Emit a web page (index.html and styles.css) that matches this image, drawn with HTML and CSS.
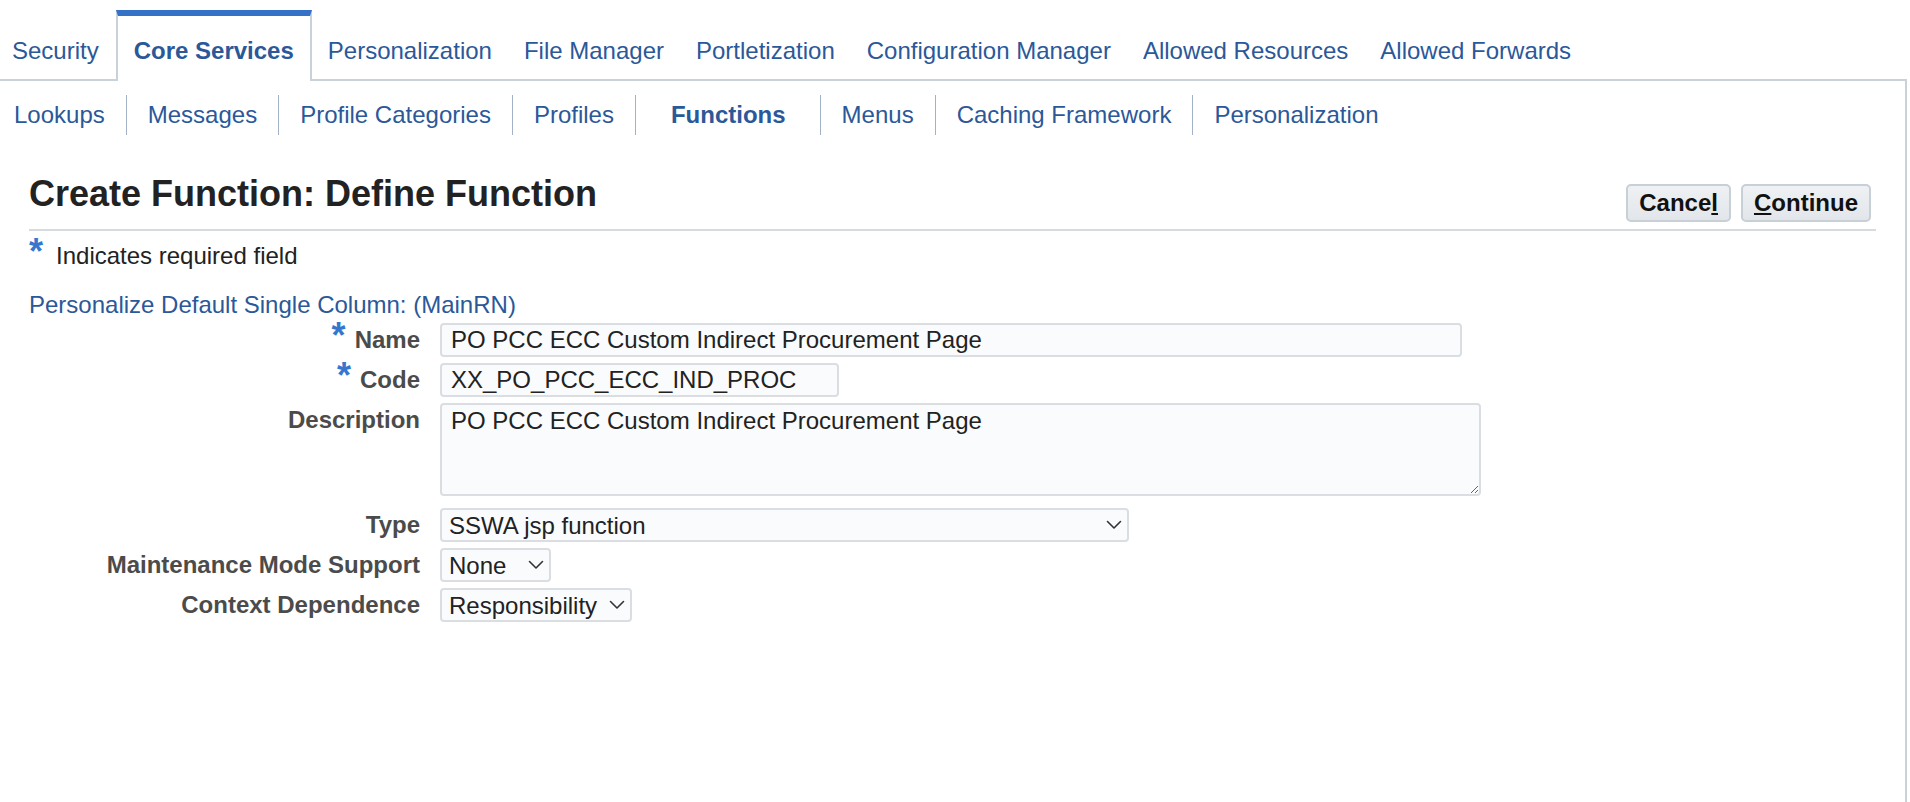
FILE: index.html
```html
<!DOCTYPE html>
<html lang="en">
<head>
<meta charset="utf-8">
<title>Create Function: Define Function</title>
<link rel="stylesheet" href="styles.css">
</head>
<body>
<div class="page">
  <nav class="tabs">
    <a class="tab first" href="#">Security</a>
    <a class="tab active" href="#">Core Services</a>
    <a class="tab" href="#">Personalization</a>
    <a class="tab" href="#">File Manager</a>
    <a class="tab" href="#">Portletization</a>
    <a class="tab" href="#">Configuration Manager</a>
    <a class="tab" href="#">Allowed Resources</a>
    <a class="tab" href="#">Allowed Forwards</a>
  </nav>
  <div class="panel">
    <nav class="subtabs">
      <a class="subtab" href="#">Lookups</a>
      <a class="subtab" href="#">Messages</a>
      <a class="subtab" href="#">Profile Categories</a>
      <a class="subtab" href="#">Profiles</a>
      <a class="subtab current" href="#">Functions</a>
      <a class="subtab" href="#">Menus</a>
      <a class="subtab" href="#">Caching Framework</a>
      <a class="subtab" href="#">Personalization</a>
    </nav>

    <div class="header">
      <h1 class="title">Create Function: Define Function</h1>
      <div class="actions">
        <button class="btn" type="button">Cance<u>l</u></button>
        <button class="btn" type="button"><u>C</u>ontinue</button>
      </div>
    </div>

    <div class="required"><span class="req">*</span>Indicates required field</div>
    <a class="personalize" href="#">Personalize Default Single Column: (MainRN)</a>

    <div class="form">
      <label class="label"><span class="req">*</span>Name</label>
      <div class="field"><input class="input w-name" type="text" value="PO PCC ECC Custom Indirect Procurement Page"></div>

      <label class="label"><span class="req">*</span>Code</label>
      <div class="field"><input class="input w-code" type="text" value="XX_PO_PCC_ECC_IND_PROC"></div>

      <label class="label">Description</label>
      <div class="field field-area"><textarea class="textarea">PO PCC ECC Custom Indirect Procurement Page</textarea></div>

      <label class="label">Type</label>
      <div class="field">
        <span class="select-wrap w-type">
          <select class="select"><option>SSWA jsp function</option></select>
          <svg class="chev" width="16" height="10" viewBox="0 0 16 10"><path d="M1.5 1.5 L8 8 L14.5 1.5" fill="none" stroke="#333" stroke-width="1.6" stroke-linecap="round" stroke-linejoin="round"/></svg>
        </span>
      </div>

      <label class="label">Maintenance Mode Support</label>
      <div class="field">
        <span class="select-wrap w-maint">
          <select class="select"><option>None</option></select>
          <svg class="chev" width="16" height="10" viewBox="0 0 16 10"><path d="M1.5 1.5 L8 8 L14.5 1.5" fill="none" stroke="#333" stroke-width="1.6" stroke-linecap="round" stroke-linejoin="round"/></svg>
        </span>
      </div>

      <label class="label">Context Dependence</label>
      <div class="field">
        <span class="select-wrap w-ctx">
          <select class="select"><option>Responsibility</option></select>
          <svg class="chev" width="16" height="10" viewBox="0 0 16 10"><path d="M1.5 1.5 L8 8 L14.5 1.5" fill="none" stroke="#333" stroke-width="1.6" stroke-linecap="round" stroke-linejoin="round"/></svg>
        </span>
      </div>
    </div>
  </div>
</div>
</body>
</html>
```

FILE: styles.css
```css
* { box-sizing: border-box; }

html, body {
  margin: 0;
  background: #ffffff;
}

body {
  font-family: "Liberation Sans", Arial, Helvetica, sans-serif;
  font-size: 24px;
  color: #222222;
  overflow: hidden;
}

.page {
  width: 1907px;
  height: 802px;
  display: flex;
  flex-direction: column;
}

/* ---------- top tabs ---------- */
.tabs {
  display: flex;
  align-items: flex-end;
  height: 81px;
  border-bottom: 2px solid #c9d1d9;
  flex: none;
}

.tab {
  height: 69px;
  display: flex;
  align-items: center;
  padding: 7px 14px 0;
  border: 2px solid transparent;
  border-top: 6px solid transparent;
  border-bottom: 0;
  color: #2b5899;
  text-decoration: none;
  white-space: nowrap;
}

.tab.first { padding-left: 10px; padding-right: 15px; }

.tab.active {
  height: 71px;
  margin-bottom: -2px;
  padding: 7px 16px 2px;
  background: #ffffff;
  border-color: #c9d1d9;
  border-top-color: #3472c7;
  font-weight: bold;
}

/* ---------- panel ---------- */
.panel {
  flex: 1;
  border-right: 2px solid #c9d1d9;
}

.subtabs {
  display: flex;
  margin-top: 14px;
  height: 40px;
}

.subtab {
  padding: 0 21px;
  line-height: 40px;
  border-left: 1px solid #a3b2c6;
  color: #2b5899;
  text-decoration: none;
  white-space: nowrap;
}

.subtab:first-child {
  border-left: 0;
  padding-left: 14px;
}

.subtab.current {
  font-weight: bold;
  padding: 0 34px 0 35px;
}

/* ---------- header ---------- */
.header {
  display: flex;
  justify-content: space-between;
  align-items: flex-end;
  margin: 39px 29px 0 29px;
  padding-bottom: 7px;
  border-bottom: 2px solid #d5dbe1;
}

.title {
  margin: 0 0 8px;
  font-size: 36px;
  line-height: 40px;
  font-weight: bold;
  color: #222222;
}

.actions {
  display: flex;
  gap: 10px;
  margin-right: 5px;
}

.btn {
  height: 38px;
  padding: 0 11px;
  border: 2px solid #c7cfd7;
  border-radius: 5px;
  background: linear-gradient(#eff1f4, #e2e6ea);
  font-family: "Liberation Sans", Arial, Helvetica, sans-serif;
  font-size: 24px;
  font-weight: bold;
  color: #111111;
}

.btn u { text-underline-offset: 2px; }

/* ---------- required note ---------- */
.req {
  font-size: 36px;
  line-height: 0;
  font-weight: bold;
  color: #3577cf;
}

.required {
  margin: 11px 29px 0;
  line-height: 28px;
  color: #222222;
}

.required .req { margin-right: 13px; }

.personalize {
  display: block;
  margin: 21px 29px 0;
  line-height: 28px;
  color: #2b5899;
  text-decoration: none;
  width: max-content;
}

/* ---------- form ---------- */
.form {
  display: grid;
  grid-template-columns: 391px 1fr;
  column-gap: 20px;
  row-gap: 6px;
  margin: 4px 29px 0;
  align-items: start;
}

.label {
  text-align: right;
  font-weight: bold;
  color: #4b4b4b;
  line-height: 34px;
  white-space: nowrap;
}

.label .req { margin-right: 9px; }

.field { display: flex; }

.field-area { padding-bottom: 6px; }

.input, .textarea, .select {
  font-family: "Liberation Sans", Arial, Helvetica, sans-serif;
  font-size: 24px;
  color: #222222;
  background: #fafbfc;
  border: 2px solid #dadee3;
  border-radius: 4px;
  outline: none;
}

.input {
  height: 34px;
  padding: 0 9px;
}

.w-name { width: 1022px; }
.w-code { width: 399px; }

.textarea {
  width: 1041px;
  height: 93px;
  padding: 2px 9px;
  resize: both;
  line-height: 28px;
}

.select-wrap {
  position: relative;
  display: inline-block;
  height: 34px;
}

.select {
  -webkit-appearance: none;
  appearance: none;
  width: 100%;
  height: 34px;
  padding: 0 30px 0 7px;
}

.w-type { width: 689px; }
.w-maint { width: 111px; }
.w-ctx { width: 192px; }

.chev {
  position: absolute;
  right: 7px;
  top: 12px;
  pointer-events: none;
}
```
